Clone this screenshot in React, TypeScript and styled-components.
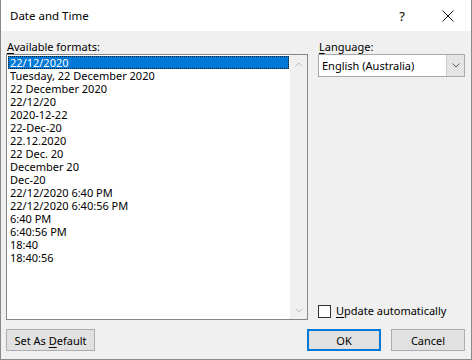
import React from 'react';
import styled, { createGlobalStyle } from 'styled-components';

const GlobalStyle = createGlobalStyle`
  html, body {
    margin: 0;
    padding: 0;
    background: #ffffff;
  }
  * {
    box-sizing: border-box;
  }
`;

const Window = styled.div`
  width: 472px;
  height: 360px;
  display: flex;
  flex-direction: column;
  border: 1px solid #8a8a8a;
  border-top: none;
  background: #f0f0f0;
  font-family: "Noto Sans", "Open Sans", sans-serif;
  font-size: 11px;
  color: #000000;
  overflow: hidden;
`;

const TitleBar = styled.div`
  height: 31px;
  flex-shrink: 0;
  display: flex;
  align-items: center;
  background: #ffffff;
  padding-left: 9px;
`;

const Title = styled.div`
  flex: 1;
  font-size: 11.5px;
  line-height: 16px;
`;

const CaptionButton = styled.div<{ $w: number }>`
  width: ${p => p.$w}px;
  height: 31px;
  display: flex;
  align-items: center;
  justify-content: center;
  font-size: 13px;
`;

const Body = styled.div`
  flex: 1;
  padding: 8px 6px 0 5px;
  display: flex;
  flex-direction: column;
`;

const Columns = styled.div`
  display: grid;
  grid-template-columns: 302px 147px;
  column-gap: 10px;
`;

const Column = styled.div`
  display: flex;
  flex-direction: column;
`;

const Label = styled.div`
  height: 15px;
  line-height: 15px;
  padding-left: 1px;
  white-space: nowrap;
`;

const Key = styled.span`
  text-decoration: underline;
  text-underline-offset: 2px;
`;

const ListBox = styled.div`
  height: 266px;
  border: 1px solid #828790;
  background: #ffffff;
  display: flex;
`;

const Items = styled.div`
  flex: 1;
  padding: 1px;
`;

const Item = styled.div<{ $selected?: boolean }>`
  height: 13px;
  line-height: 13px;
  padding-left: 2px;
  white-space: nowrap;
  color: ${p => (p.$selected ? '#ffffff' : '#000000')};
  background: ${p => (p.$selected ? '#0078d7' : 'transparent')};
  outline: ${p => (p.$selected ? '1px dotted #1a1a1a' : 'none')};
  outline-offset: -1px;
`;

const ScrollBar = styled.div`
  width: 17px;
  background: #f0f0f0;
  display: flex;
  flex-direction: column;
  justify-content: space-between;
  align-items: center;
  padding: 7px 0 6px;
`;

const RightContent = styled.div`
  height: 266px;
  display: flex;
  flex-direction: column;
  justify-content: space-between;
  padding-bottom: 2px;
`;

const Select = styled.div`
  height: 23px;
  border: 1px solid #a8a8a8;
  background: #ffffff;
  display: flex;
  align-items: stretch;
`;

const SelectValue = styled.div`
  flex: 1;
  padding-left: 3px;
  line-height: 21px;
  white-space: nowrap;
`;

const SelectArrow = styled.div`
  width: 18px;
  background: #e5e5e5;
  border-left: 1px solid #cccccc;
  display: flex;
  align-items: center;
  justify-content: center;
`;

const CheckRow = styled.label`
  display: flex;
  align-items: center;
  gap: 5px;
  height: 14px;
  line-height: 14px;
  white-space: nowrap;
`;

const CheckBox = styled.span`
  width: 13px;
  height: 13px;
  border: 1px solid #333333;
  background: #ffffff;
`;

const ButtonRow = styled.div`
  display: flex;
  align-items: center;
  margin-top: 9px;
  gap: 10px;
`;

const Button = styled.div<{ $w: number; $default?: boolean }>`
  width: ${p => p.$w}px;
  height: 22px;
  display: flex;
  align-items: center;
  justify-content: center;
  background: #e1e1e1;
  border: ${p => (p.$default ? '2px solid #0078d7' : '1px solid #adadad')};
  white-space: nowrap;
`;

const Spacer = styled.div`
  flex: 1;
`;

const formats = [
  '22/12/2020',
  'Tuesday, 22 December 2020',
  '22 December 2020',
  '22/12/20',
  '2020-12-22',
  '22-Dec-20',
  '22.12.2020',
  '22 Dec. 20',
  'December 20',
  'Dec-20',
  '22/12/2020 6:40 PM',
  '22/12/2020 6:40:56 PM',
  '6:40 PM',
  '6:40:56 PM',
  '18:40',
  '18:40:56',
];

const Chevron = ({ up, color }: { up?: boolean; color: string }) => (
  <svg width="8" height="5" viewBox="0 0 8 5">
    <path
      d={up ? 'M0.5 4.5 L4 1 L7.5 4.5' : 'M0.5 0.5 L4 4 L7.5 0.5'}
      fill="none"
      stroke={color}
      strokeWidth="1"
    />
  </svg>
);

const App = () => {
  return (
    <Window>
      <GlobalStyle />
      <TitleBar>
        <Title>Date and Time</Title>
        <CaptionButton $w={46}>?</CaptionButton>
        <CaptionButton $w={46}>
          <svg width="12" height="12" viewBox="0 0 12 12">
            <path d="M0.5 0.5 L11.5 11.5 M11.5 0.5 L0.5 11.5" stroke="#111" strokeWidth="1" />
          </svg>
        </CaptionButton>
      </TitleBar>
      <Body>
        <Columns>
          <Column>
            <Label>
              <Key>A</Key>vailable formats:
            </Label>
            <ListBox>
              <Items>
                {formats.map((f, i) => (
                  <Item key={i} $selected={i === 0}>
                    {f}
                  </Item>
                ))}
              </Items>
              <ScrollBar>
                <Chevron up color="#c0c0c0" />
                <Chevron color="#c0c0c0" />
              </ScrollBar>
            </ListBox>
          </Column>
          <Column>
            <Label>
              <Key>L</Key>anguage:
            </Label>
            <RightContent>
              <Select>
                <SelectValue>English (Australia)</SelectValue>
                <SelectArrow>
                  <Chevron color="#555555" />
                </SelectArrow>
              </Select>
              <CheckRow>
                <CheckBox />
                <span>
                  <Key>U</Key>pdate automatically
                </span>
              </CheckRow>
            </RightContent>
          </Column>
        </Columns>
        <ButtonRow>
          <Button $w={89}>
            <span>
              Set As <Key>D</Key>efault
            </span>
          </Button>
          <Spacer />
          <Button $w={74} $default>
            OK
          </Button>
          <Button $w={74}>Cancel</Button>
        </ButtonRow>
      </Body>
    </Window>
  );
};

export default App;
